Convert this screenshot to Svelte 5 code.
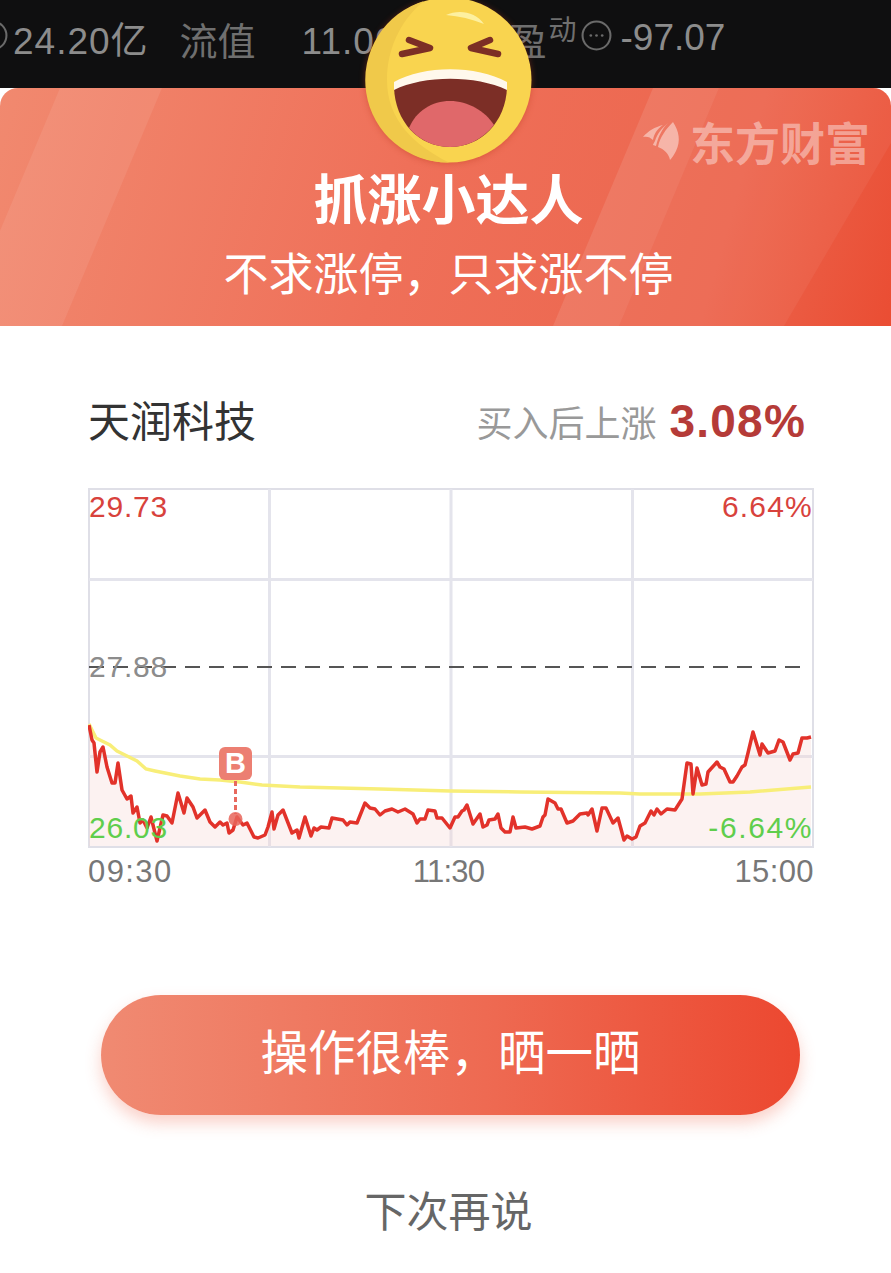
<script>
	const red = [
		[89,725],[92,740],[94,743],[97,772],[100,752],[103,747],[107,767],[112,783],[115,783],[118,763],[122,790],[127,799],[131,796],[133,813],[137,807],[140,823],[143,820],[147,828],[151,817],[157,841],[163,815],[167,816],[172,823],[178,793],[184,813],[187,798],[193,807],[197,818],[205,810],[210,822],[215,827],[220,822],[223,825],[227,823],[229,833],[233,830],[237,817],[243,825],[247,823],[254,837],[258,838],[265,835],[268,827],[272,812],[274,829],[278,815],[283,810],[292,833],[297,830],[299,838],[305,817],[311,836],[314,828],[317,830],[321,827],[329,828],[332,818],[343,820],[347,825],[350,822],[357,823],[365,803],[370,808],[375,809],[380,815],[385,811],[392,809],[398,812],[405,809],[413,814],[417,823],[420,819],[425,819],[428,810],[435,811],[437,818],[442,818],[450,828],[455,817],[458,817],[462,811],[464,810],[467,805],[473,824],[480,814],[483,827],[487,825],[489,820],[495,819],[498,814],[501,828],[505,832],[510,832],[513,817],[516,828],[525,827],[532,829],[540,826],[543,817],[545,815],[548,799],[555,803],[558,809],[561,809],[567,823],[573,821],[580,814],[587,813],[588,815],[592,809],[597,831],[602,808],[606,808],[613,823],[618,818],[624,840],[627,836],[632,839],[636,837],[640,826],[645,823],[651,811],[654,815],[657,809],[661,814],[667,809],[675,810],[682,799],[687,763],[691,764],[693,794],[697,768],[702,785],[706,784],[708,772],[717,762],[720,767],[724,769],[730,782],[733,782],[737,776],[742,767],[745,765],[748,753],[753,732],[760,755],[762,744],[768,753],[775,751],[779,740],[783,742],[790,760],[793,754],[798,753],[802,738],[807,738],[811,737]
	];
	const yellow = [
		[89,724],[96,738],[102,741],[110,745],[117,751],[125,755],[137,761],[146,769],[155,771],[165,773],[180,776],[200,779],[220,780],[240,782],[262,785],[300,787],[380,789],[450,791],[520,792],[620,793],[640,794],[700,794],[750,792],[811,787]
	];
	const toPoints = (list) => list.map((p) => p.join(',')).join(' ');
	const redLine = toPoints(red);
	const yellowLine = toPoints(yellow);
	const area = `89,846 ${redLine} 811,846`;
</script>

<div class="page">
	<div class="quote-bar">
		<svg class="dots cut" viewBox="0 0 30 30"><circle cx="15" cy="15" r="13.5" /><circle class="dot" cx="9.5" cy="15" r="1.3" /><circle class="dot" cx="15" cy="15" r="1.3" /><circle class="dot" cx="20.5" cy="15" r="1.3" /></svg>
		<span class="val first">24.20亿</span>
		<span class="lbl">流值</span>
		<span class="val third">11.00亿</span>
		<span class="lbl pe">市盈</span>
		<sup class="sup">动</sup>
		<svg class="dots" viewBox="0 0 30 30"><circle cx="15" cy="15" r="13.5" /><circle class="dot" cx="9.5" cy="15" r="1.3" /><circle class="dot" cx="15" cy="15" r="1.3" /><circle class="dot" cx="20.5" cy="15" r="1.3" /></svg>
		<span class="val last">-97.07</span>
	</div>

	<header class="banner">
		<svg class="stripes" viewBox="0 0 891 238" preserveAspectRatio="none">
			<polygon points="60,0 162,0 62,238 -40,238" fill="#fff" opacity="0.08" />
			<polygon points="653,0 719,0 619,238 553,238" fill="#fff" opacity="0.1" />
			<polygon points="719,0 891,0 891,55 784,238 619,238" fill="#fff" opacity="0.05" />
		</svg>
		<div class="logo">
			<svg viewBox="0 0 40 42" width="40" height="42">
				<path d="M0 16 C5 10 12 6 20 4 C14 8 11 13 10 19 C7 16 4 15 0 16Z" />
				<path d="M25 2 C19 7 14 13 12 20 C11 22 10 23 10 24 L13 25 C15 16 19 8 25 2Z" />
				<path d="M30 1 C36 10 38 20 33 30 C31 34 29 37 27 39 C26 33 21 28 15 26 C17 16 23 8 30 1Z" />
			</svg>
			<span>东方财富</span>
		</div>
		<h1>抓涨小达人</h1>
		<p>不求涨停，只求涨不停</p>
	</header>

	<svg class="emoji" viewBox="0 0 170 170" width="170" height="170">
		<circle cx="85" cy="85" r="82.5" fill="#f9d44f" />
		<path d="M60 6 A82.5 82.5 0 0 0 85 167.5 C50 150 23 125 23 85 C23 50 40 22 60 6Z" fill="#f0c94a" />
		<path d="M82 20 C95 14 112 17 120 29 C108 24 95 21 82 20Z" fill="#fdf0a0" />
		<g fill="none" stroke="#7c2e25" stroke-width="6.5" stroke-linecap="round" stroke-linejoin="round">
			<path d="M45 45 L66 53 L38 59" />
			<path d="M126 45 L107 53 L134 59" />
		</g>
		<path d="M30 92 C60 78 112 78 143 92 C142 127 117 152 86 152 C55 152 31 127 30 92Z" fill="#7c2e26" />
		<path d="M45 133 C52 116 68 106 86 106 C104 106 121 116 130 130 C118 145 102 152 86 152 C70 152 55 145 45 133Z" fill="#e0686a" />
		<path d="M30 87 C60 70 112 70 143 87 L143 95 C112 80 60 80 30 95Z" fill="#fff8ec" />
	</svg>

	<main class="content">
		<div class="stock-row">
			<span class="stock-name">天润科技</span>
			<span class="gain"><em>买入后上涨</em><strong>3.08%</strong></span>
		</div>

		<div class="chart">
			<svg viewBox="88 488 726 360" width="726" height="360">
				<g class="grid">
					<line x1="89" y1="579.5" x2="813" y2="579.5" />
					<line x1="89" y1="756.5" x2="813" y2="756.5" />
					<line x1="269.5" y1="489" x2="269.5" y2="847" />
					<line x1="451" y1="489" x2="451" y2="847" />
					<line x1="632.5" y1="489" x2="632.5" y2="847" />
				</g>
				<line class="prev" x1="89" y1="667" x2="808" y2="667" />
				<polygon points={area} fill="#f4d4d0" opacity="0.3" />
				<polyline class="avg" points={yellowLine} />
				<polyline class="price" points={redLine} />
				<line class="stem" x1="235.5" y1="781" x2="235.5" y2="814" />
				<circle cx="235.5" cy="819" r="7" fill="#e8655a" opacity="0.85" />
				<rect x="219" y="747" width="33" height="33" rx="6" fill="#ec7f72" />
			</svg>
			<span class="buy-mark">B</span>
			<span class="tag tl">29.73</span>
			<span class="tag tr">6.64%</span>
			<span class="tag ml">27.88</span>
			<span class="tag bl">26.03</span>
			<span class="tag br">-6.64%</span>
		</div>

		<div class="times">
			<span>09:30</span>
			<span class="mid">11:30</span>
			<span class="end">15:00</span>
		</div>

		<button class="share">操作很棒，晒一晒</button>
		<button class="later">下次再说</button>
	</main>
</div>

<style>
	:global(body) {
		margin: 0;
		background: #fff;
	}

	.page {
		position: relative;
		width: 891px;
		height: 1273px;
		overflow: hidden;
		background: #fff;
		font-family: "Noto Sans CJK SC", "Liberation Sans", sans-serif;
	}

	.quote-bar {
		display: flex;
		align-items: center;
		height: 88px;
		padding-bottom: 12px;
		box-sizing: border-box;
		background: #0f0f10;
		color: #8c8c8c;
		white-space: nowrap;
	}

	.val {
		font-family: "Liberation Sans", "Noto Sans CJK SC", sans-serif;
		font-size: 37px;
		letter-spacing: 1px;
	}

	.lbl {
		font-size: 38px;
		color: #6f6f6f;
	}

	.dots {
		flex: none;
		width: 31px;
		height: 31px;
		margin-top: -6px;
	}

	.dots circle {
		fill: none;
		stroke: #6a6a6a;
		stroke-width: 2;
	}

	.dots .dot {
		fill: #6a6a6a;
		stroke: none;
	}

	.dots.cut {
		margin-left: -23px;
	}

	.first {
		margin-left: 5px;
	}

	.quote-bar .lbl {
		margin-left: 31px;
	}

	.third {
		margin-left: 46px;
	}

	.quote-bar .pe {
		margin-left: 36px;
	}

	.sup {
		font-size: 28px;
		color: #6f6f6f;
		margin: -20px 4px 0 2px;
		line-height: 1;
	}

	.last {
		margin-left: 9px;
		letter-spacing: 0;
	}

	.banner {
		position: relative;
		height: 238px;
		box-sizing: border-box;
		padding: 73px 0 0 6px;
		border-radius: 18px 18px 0 0;
		overflow: hidden;
		background: linear-gradient(106deg, #f1896f 0%, #ef7059 45%, #ec664e 80%, #ea4d33 100%);
		color: #fff;
		text-align: center;
	}

	.stripes {
		position: absolute;
		inset: 0;
		width: 100%;
		height: 100%;
	}

	.logo {
		position: absolute;
		top: 30px;
		left: 643px;
		display: flex;
		align-items: center;
		gap: 7px;
	}

	.logo svg {
		fill: rgba(255, 255, 255, 0.45);
	}

	.logo span {
		font-size: 45px;
		font-weight: 700;
		line-height: 48px;
		color: rgba(255, 255, 255, 0.42);
	}

	.banner h1 {
		position: relative;
		margin: 0 0 7px;
		font-size: 54px;
		font-weight: 700;
		line-height: 72px;
	}

	.banner p {
		position: relative;
		margin: 0;
		font-size: 45px;
		line-height: 64px;
		font-weight: 400;
	}

	.emoji {
		position: absolute;
		top: -5px;
		left: 364px;
		filter: drop-shadow(0 1px 3px rgba(190, 60, 30, 0.45));
	}

	.content {
		display: flex;
		flex-direction: column;
		align-items: flex-start;
		padding-left: 88px;
	}

	.stock-row {
		display: flex;
		justify-content: space-between;
		align-items: center;
		width: 718px;
		height: 64px;
		margin-top: 63px;
	}

	.stock-name {
		padding-bottom: 6px;
		font-size: 42px;
		color: #333;
	}

	.gain {
		display: flex;
		align-items: center;
		gap: 13px;
	}

	.gain em {
		font-style: normal;
		font-size: 36px;
		color: #999;
	}

	.gain strong {
		font-family: "Liberation Sans", sans-serif;
		font-size: 46px;
		letter-spacing: 1.2px;
		color: #b53b38;
	}

	.chart {
		position: relative;
		width: 726px;
		height: 360px;
		margin-top: 35px;
		box-sizing: border-box;
		border: 2px solid #dfdfe7;
	}

	.chart svg {
		position: absolute;
		top: -2px;
		left: -2px;
		display: block;
	}

	.grid line {
		stroke: #e4e4ec;
		stroke-width: 3;
	}

	.prev {
		stroke: #555;
		stroke-width: 2;
		stroke-dasharray: 15 9;
	}

	.avg {
		fill: none;
		stroke: #f8ee78;
		stroke-width: 3.5;
	}

	.price {
		fill: none;
		stroke: #e2322a;
		stroke-width: 3.5;
		stroke-linejoin: round;
	}

	.stem {
		stroke: #e8695e;
		stroke-width: 3;
		stroke-dasharray: 5 3;
	}

	.buy-mark {
		position: absolute;
		top: 257px;
		left: 129px;
		width: 33px;
		height: 33px;
		line-height: 33px;
		text-align: center;
		font-family: "Liberation Sans", sans-serif;
		font-size: 29px;
		font-weight: 700;
		color: #fff;
	}

	.tag {
		position: absolute;
		font-family: "Liberation Sans", sans-serif;
		font-size: 30px;
		line-height: 34px;
		letter-spacing: 0.8px;
	}

	.tl {
		top: 0;
		left: -1px;
		color: #d8423c;
	}

	.tr {
		top: 0;
		right: -1px;
		letter-spacing: 1.2px;
		color: #d8423c;
	}

	.ml {
		top: 160px;
		left: -1px;
		color: #8c8c8c;
	}

	.bl {
		top: 321px;
		left: -1px;
		color: #5fce4c;
	}

	.br {
		top: 321px;
		right: -1px;
		letter-spacing: 1.6px;
		color: #5fce4c;
	}

	.times {
		display: flex;
		justify-content: space-between;
		width: 726px;
		margin-top: 6px;
		font-family: "Liberation Sans", sans-serif;
		font-size: 31px;
		line-height: 36px;
		letter-spacing: 1.4px;
		color: #777;
	}

	.times .mid {
		margin-right: 10px;
		letter-spacing: -0.8px;
	}

	.times .end {
		letter-spacing: 0.4px;
	}

	.share {
		width: 699px;
		height: 120px;
		margin: 105px 0 0 13px;
		padding: 0 0 12px;
		border: 0;
		border-radius: 60px;
		background: linear-gradient(90deg, #f08a72 0%, #ee6a52 55%, #ec4830 100%);
		box-shadow: 0 8px 16px rgba(236, 90, 60, 0.28);
		color: #fff;
		font-family: inherit;
		font-size: 47.5px;
	}

	.later {
		width: 721px;
		margin-top: 61px;
		padding: 0;
		border: 0;
		background: none;
		color: #666;
		font-family: inherit;
		font-size: 42px;
		line-height: 66px;
	}
</style>
